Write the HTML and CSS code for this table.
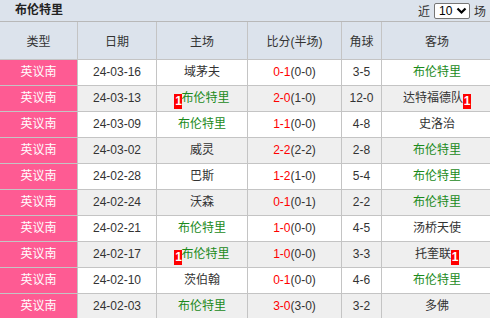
FILE: index.html
```html
<!DOCTYPE html>
<html lang="zh">
<head>
<meta charset="utf-8">
<link rel="stylesheet" href="styles.css">
</head>
<body>
<div class="panel">
  <div class="titlebar">
    <span class="title">布伦特里</span>
    <div class="filter">
      <span>近</span>
      <span class="select">10<svg width="11" height="8" viewBox="0 0 11 8"><path d="M1.5 1.5 L5.5 5.5 L9.5 1.5" fill="none" stroke="#000" stroke-width="2.2"/></svg></span>
      <span>场</span>
      <span class="check"></span>
    </div>
  </div>
  <table class="games">
    <colgroup>
      <col class="c1"><col class="c2"><col class="c3"><col class="c4"><col class="c5"><col class="c6">
    </colgroup>
    <thead>
      <tr><th>类型</th><th>日期</th><th>主场</th><th>比分(半场)</th><th>角球</th><th>客场</th></tr>
    </thead>
    <tbody>
      <tr><td class="lg">英议南</td><td>24-03-16</td><td>域茅夫</td><td><span class="r">0-1</span>(0-0)</td><td>3-5</td><td class="g">布伦特里</td></tr>
      <tr><td class="lg">英议南</td><td>24-03-13</td><td class="g"><span class="badge">1</span>布伦特里</td><td><span class="r">2-0</span>(1-0)</td><td>12-0</td><td>达特福德队<span class="badge">1</span></td></tr>
      <tr><td class="lg">英议南</td><td>24-03-09</td><td class="g">布伦特里</td><td><span class="r">1-1</span>(0-0)</td><td>4-8</td><td>史洛治</td></tr>
      <tr><td class="lg">英议南</td><td>24-03-02</td><td>威灵</td><td><span class="r">2-2</span>(2-2)</td><td>2-8</td><td class="g">布伦特里</td></tr>
      <tr><td class="lg">英议南</td><td>24-02-28</td><td>巴斯</td><td><span class="r">1-2</span>(1-0)</td><td>5-4</td><td class="g">布伦特里</td></tr>
      <tr><td class="lg">英议南</td><td>24-02-24</td><td>沃森</td><td><span class="r">0-1</span>(0-1)</td><td>2-2</td><td class="g">布伦特里</td></tr>
      <tr><td class="lg">英议南</td><td>24-02-21</td><td class="g">布伦特里</td><td><span class="r">1-0</span>(0-0)</td><td>4-5</td><td>汤桥天使</td></tr>
      <tr><td class="lg">英议南</td><td>24-02-17</td><td class="g"><span class="badge">1</span>布伦特里</td><td><span class="r">1-0</span>(0-0)</td><td>3-3</td><td>托奎联<span class="badge">1</span></td></tr>
      <tr><td class="lg">英议南</td><td>24-02-10</td><td>茨伯翰</td><td><span class="r">0-1</span>(0-0)</td><td>4-6</td><td class="g">布伦特里</td></tr>
      <tr><td class="lg">英议南</td><td>24-02-03</td><td class="g">布伦特里</td><td><span class="r">3-0</span>(3-0)</td><td>3-2</td><td>多佛</td></tr>
    </tbody>
  </table>
</div>
</body>
</html>
```
FILE: styles.css
```css
html, body {
  margin: 0;
  padding: 0;
  background: #ffffff;
  overflow: hidden;
}
body {
  width: 490px;
  height: 318px;
  font-family: "Liberation Sans", "Noto Sans CJK SC", sans-serif;
  font-size: 12px;
  color: #333;
}
.panel {
  width: 492px;
}
.titlebar {
  height: 21px;
  background: #dce3ec;
  border-bottom: 1px solid #b8b8b8;
  display: flex;
  align-items: center;
  justify-content: space-between;
}
.title {
  font-weight: bold;
  color: #222;
  margin-left: 15px;
  line-height: 21px;
}
.filter {
  display: flex;
  align-items: center;
  gap: 4px;
  margin-right: -12px;
  color: #333;
}
.select {
  display: inline-flex;
  align-items: center;
  justify-content: space-between;
  box-sizing: border-box;
  width: 36px;
  height: 16px;
  border: 1px solid #767676;
  background: #fff;
  border-radius: 2px;
  padding: 0 2px 0 4px;
  color: #000;
  font-size: 12px;
  line-height: 14px;
}
.check {
  display: inline-block;
  width: 13px;
  height: 13px;
  box-sizing: border-box;
  border: 1px solid #767676;
  border-radius: 2px;
  background: #fff;
  margin-left: 1px;
}
.games {
  border-collapse: collapse;
  table-layout: fixed;
  width: 493px;
  margin-left: -1px;
}
.c1 { width: 78px; }
.c2 { width: 79px; }
.c3 { width: 91px; }
.c4 { width: 94px; }
.c5 { width: 40px; }
.c6 { width: 111px; }
.games th, .games td {
  border: 1px solid #c4c4c4;
  text-align: center;
  padding: 0;
  white-space: nowrap;
  overflow: hidden;
}
.games thead th {
  border-top: none;
  height: 37px;
  background: #dce3ec;
  font-weight: normal;
  color: #333;
}
.games td {
  height: 25px;
  line-height: 25px;
}
.games tbody tr:nth-child(even) td {
  background: #efefef;
}
.games td.lg {
  background: #fe5b93 !important;
  color: #fff;
}
.g { color: #1a8a1a; }
.r { color: #ff0000; }
.badge {
  display: inline-block;
  background: #ff0000;
  color: #fff;
  font-weight: bold;
  width: 8px;
  height: 15px;
  line-height: 15px;
  vertical-align: -3px;
  text-align: center;
  font-size: 12px;
}
.g .badge { margin-right: -1px; }
```
